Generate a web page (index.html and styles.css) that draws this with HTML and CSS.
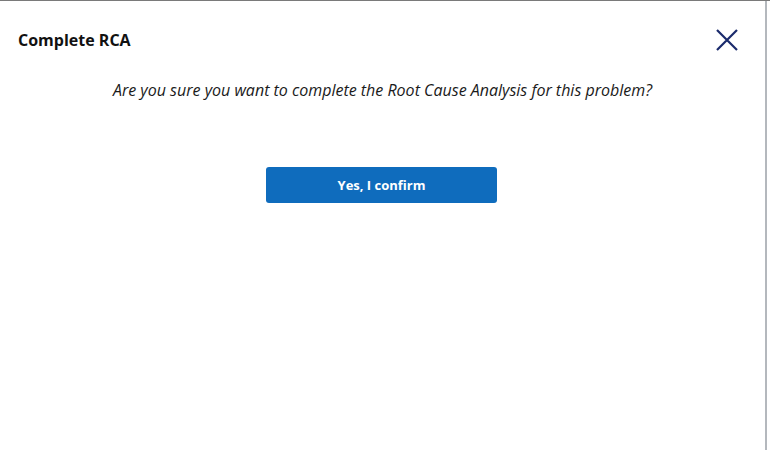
FILE: index.html
```html
<!DOCTYPE html>
<html>
<head>
<meta charset="utf-8">
<link rel="stylesheet" href="styles.css">
</head>
<body>
<div class="page">
  <div class="dialog">
    <div class="header">
      <h1 class="title">Complete RCA</h1>
      <button class="close" aria-label="Close">
        <svg width="24" height="24" viewBox="0 0 24 24"><path d="M2 2 L22 22 M22 2 L2 22" stroke="#1a2a6c" stroke-width="2.2" fill="none"/></svg>
      </button>
    </div>
    <p class="message">Are you sure you want to complete the Root Cause Analysis for this problem?</p>
    <div class="actions">
      <button class="confirm">Yes, I confirm</button>
    </div>
  </div>
  <div class="edge"></div>
</div>
</body>
</html>
```
FILE: styles.css
```css
html, body {
  margin: 0;
  padding: 0;
  background: #ffffff;
}
.page {
  display: flex;
  height: 450px;
  border-top: 1px solid #7a7a7a;
  box-sizing: border-box;
}
.dialog {
  width: 765px;
  background: #fff;
  font-family: "Open Sans", "Segoe UI", sans-serif;
  color: #1a1a1a;
  border-top-right-radius: 6px;
}
.edge {
  width: 2px;
  background: #b4b8bd;
}
.header {
  display: flex;
  justify-content: space-between;
  align-items: center;
  padding: 27px 26px 0 18px;
}
.title {
  margin: 0;
  font-size: 16px;
  font-weight: 700;
  color: #111;
}
.close {
  border: none;
  background: none;
  padding: 0;
  width: 24px;
  height: 24px;
  display: flex;
  cursor: pointer;
}
.message {
  margin: 27px 0 0;
  line-height: 22px;
  text-align: center;
  font-style: italic;
  font-size: 16px;
  color: #1a1a1a;
}
.actions {
  display: flex;
  justify-content: center;
  margin-top: 66px;
  padding-right: 2px;
}
.confirm {
  width: 231px;
  height: 36px;
  border: none;
  border-radius: 3px;
  background: #0f6cbd;
  color: #fff;
  font-family: "Open Sans", "Segoe UI", sans-serif;
  font-weight: 700;
  font-size: 13px;
  padding: 0;
}
```
